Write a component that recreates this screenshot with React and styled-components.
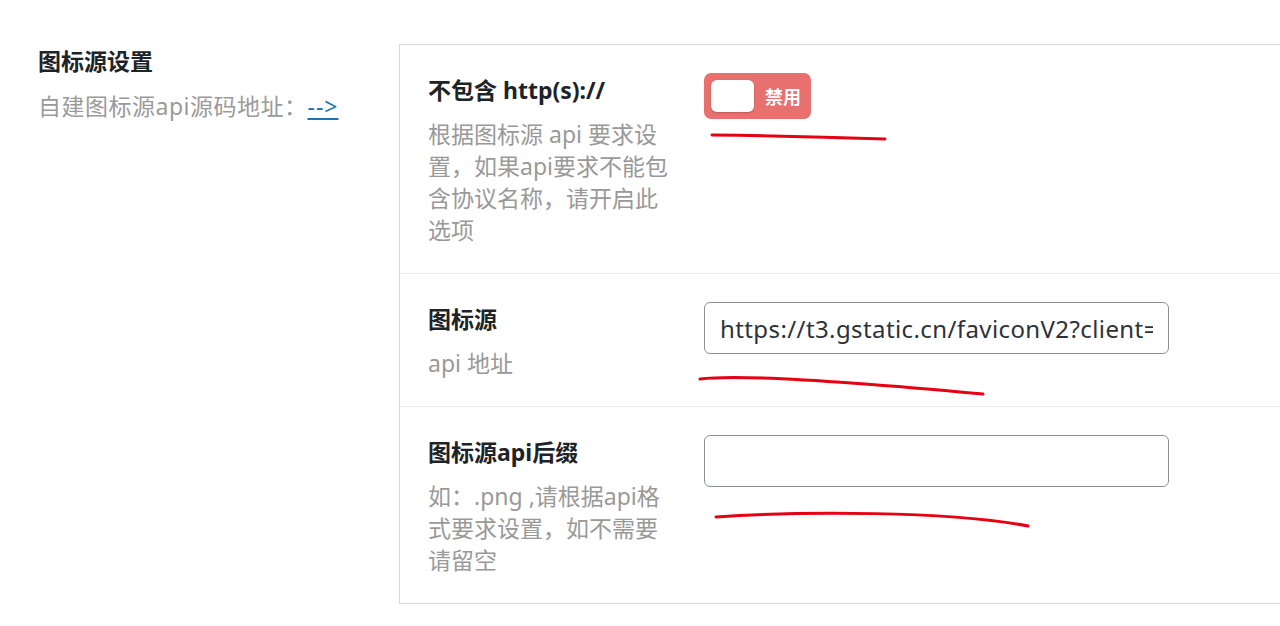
import styled, { createGlobalStyle } from 'styled-components';

const GlobalStyle = createGlobalStyle`
  html, body {
    margin: 0;
    padding: 0;
    background: #ffffff;
    overflow: hidden;
  }

  body {
    font-family: 'Noto Sans', 'Noto Sans CJK SC', sans-serif;
    color: #1d2327;
  }
`;

const rows = [
  {
    id: 'nohttp',
    title: '不包含 http(s)://',
    desc: '根据图标源 api 要求设置，如果api要求不能包含协议名称，请开启此选项',
    control: 'switch',
  },
  {
    id: 'source',
    title: '图标源',
    desc: 'api 地址',
    control: 'input',
    value: 'https://t3.gstatic.cn/faviconV2?client=SOCIAL&type=FAVICON',
  },
  {
    id: 'suffix',
    title: '图标源api后缀',
    desc: '如：.png ,请根据api格式要求设置，如不需要请留空',
    control: 'input',
    value: '',
  },
];

const App = () => {
  return (
    <>
      <GlobalStyle />
      <Page>
        <Side>
          <SideTitle>图标源设置</SideTitle>
          <SideDesc>
            自建图标源api源码地址：<a href="#src">--&gt;</a>
          </SideDesc>
        </Side>

        <Panel>
          {rows.map((row) => (
            <Row key={row.id}>
              <Label>
                <h4>{row.title}</h4>
                <p>{row.desc}</p>
              </Label>
              <Control>
                {row.control === 'switch' ? (
                  <Switch>
                    <span className="knob" />
                    <span className="text">禁用</span>
                  </Switch>
                ) : (
                  <TextInput type="text" defaultValue={row.value} readOnly />
                )}
              </Control>
            </Row>
          ))}
        </Panel>

        <Marks viewBox="0 0 1280 626" width="1280" height="626">
          <path d="M712 135 Q800 136 885 139" />
          <path d="M700 379 C730 375 800 377 983 394" />
          <path d="M716 517 C800 511 950 511 1028 526" />
        </Marks>
      </Page>
    </>
  );
};

const Page = styled.main`
  position: relative;
  width: 1280px;
  height: 626px;
  overflow: hidden;
  display: flex;
  align-items: flex-start;
  padding-top: 44px;
  box-sizing: border-box;
`;

const Side = styled.aside`
  flex: none;
  width: 399px;
  padding: 1px 0 0 38px;
  box-sizing: border-box;
`;

const SideTitle = styled.h3`
  margin: 0;
  font-size: 23px;
  line-height: 32px;
  font-weight: 700;
  color: #1d2327;
`;

const SideDesc = styled.p`
  margin: 13px 0 0;
  font-size: 23px;
  line-height: 32px;
  letter-spacing: 0.5px;
  color: #9a9a9a;
  white-space: nowrap;

  a {
    color: #2271b1;
    text-decoration: underline;
    text-underline-offset: 3px;
    letter-spacing: 1px;
  }
`;

const Panel = styled.section`
  flex: none;
  width: 1000px;
  background: #ffffff;
  border: 1px solid #d8d8da;
  border-right: none;
`;

const Row = styled.div`
  display: grid;
  grid-template-columns: 276px 1fr;
  padding: 29px 0 27px 28px;

  & + & {
    border-top: 1px solid #ececec;
  }
`;

const Label = styled.div`
  h4 {
    margin: 0;
    font-size: 23px;
    line-height: 32px;
    font-weight: 700;
    color: #1d2327;
  }

  p {
    margin: 12px 0 0;
    width: 241px;
    font-size: 23px;
    line-height: 32px;
    color: #999999;
  }
`;

const Control = styled.div`
  margin-top: -1px;
`;

const Switch = styled.div`
  display: flex;
  align-items: center;
  gap: 11px;
  width: 107px;
  height: 46px;
  padding: 0 7px;
  box-sizing: border-box;
  border-radius: 7px;
  background: #e8706f;

  .knob {
    flex: none;
    width: 43px;
    height: 32px;
    border-radius: 6px;
    background: #ffffff;
    box-shadow: 0 1px 2px rgba(0, 0, 0, 0.2);
  }

  .text {
    font-size: 18px;
    font-weight: 700;
    color: #ffffff;
  }
`;

const TextInput = styled.input`
  display: block;
  width: 465px;
  height: 52px;
  padding: 0 15px;
  box-sizing: border-box;
  border: 1.5px solid #8c8f94;
  border-radius: 6px;
  background: #ffffff;
  font-family: 'Noto Sans', 'Noto Sans CJK SC', sans-serif;
  font-size: 24px;
  letter-spacing: 0.4px;
  color: #2c3338;
  outline: none;
`;

const Marks = styled.svg`
  position: absolute;
  left: 0;
  top: 0;
  pointer-events: none;

  path {
    fill: none;
    stroke: #e60012;
    stroke-width: 3;
    stroke-linecap: round;
  }
`;

export default App;
